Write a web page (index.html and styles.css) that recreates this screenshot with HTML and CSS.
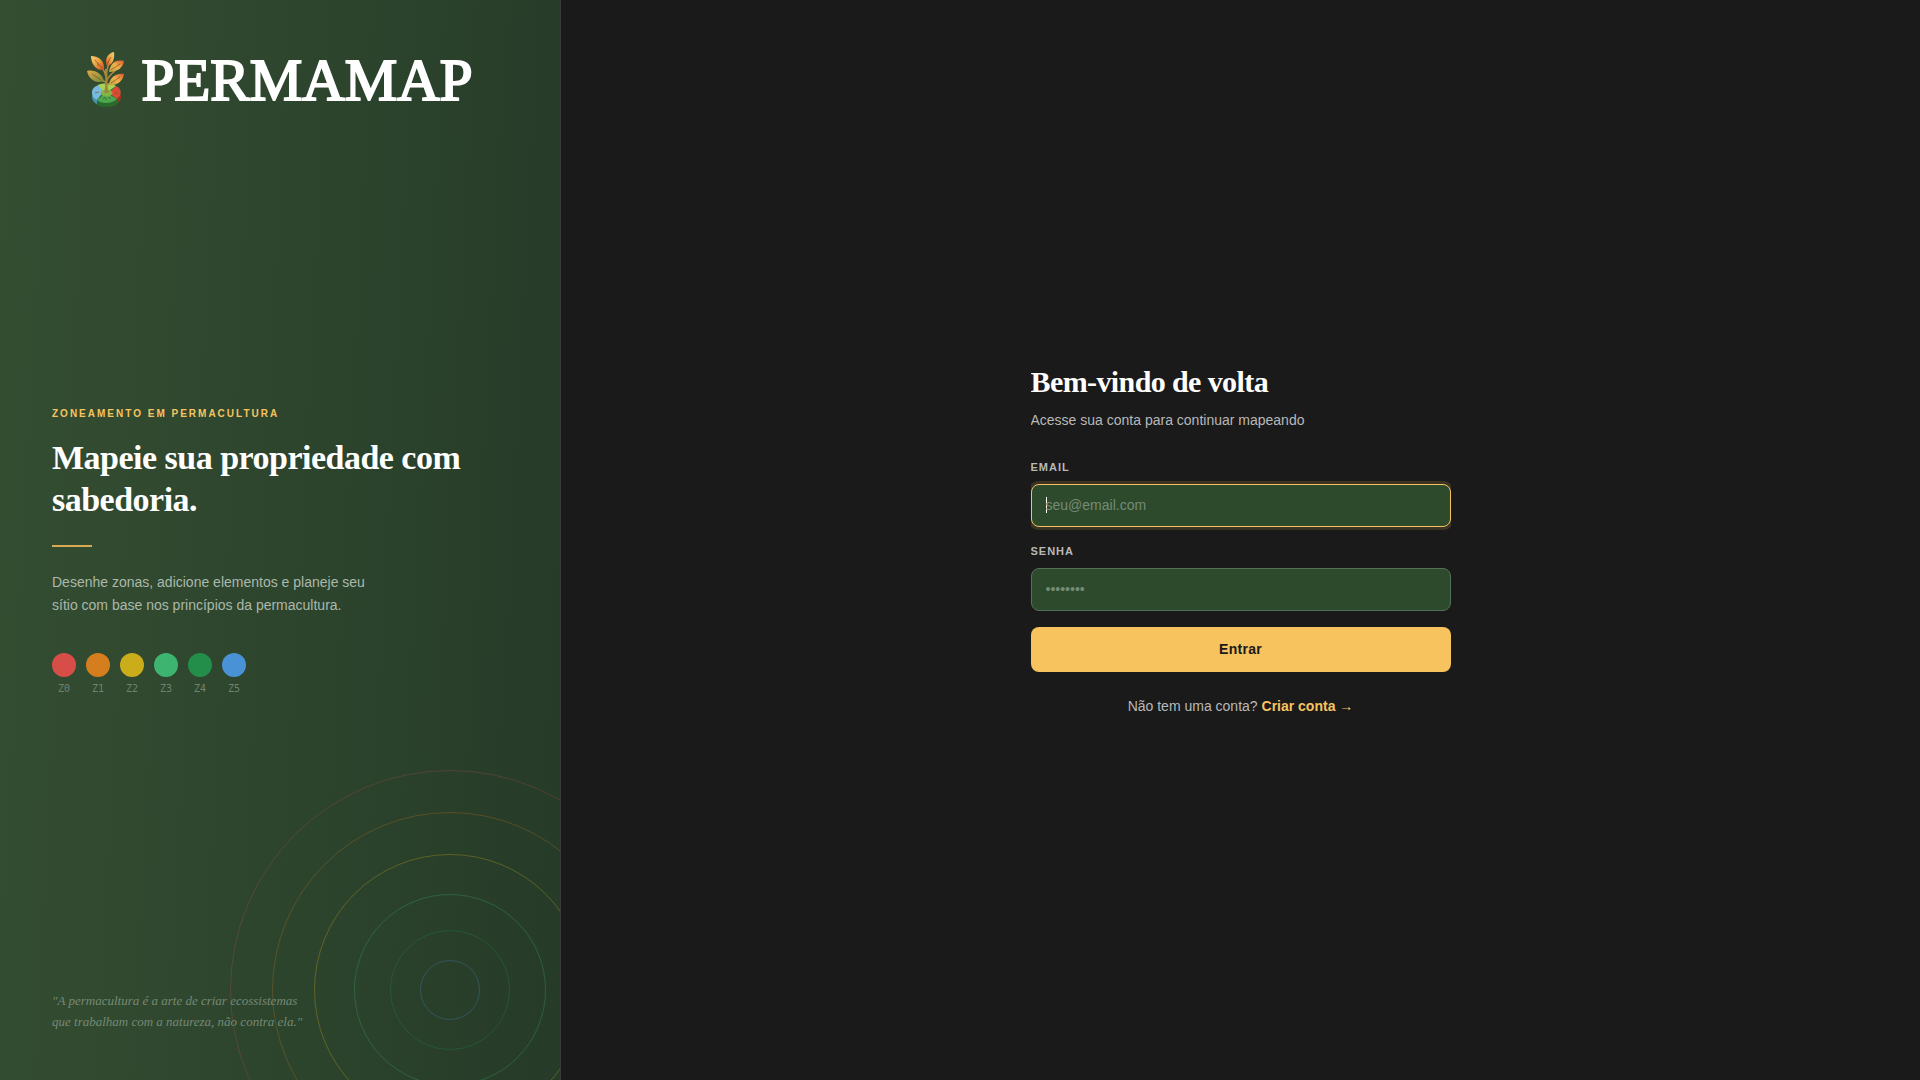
FILE: index.html
```html
<!DOCTYPE html>
<html lang="pt-BR">
<head>
    <meta charset="UTF-8">
    <meta name="viewport" content="width=device-width, initial-scale=1.0">
    <title>Permamap - Entrar</title>
    <link rel="stylesheet" href="styles.css">
</head>
<body>
    <div class="page">
        <aside class="panel">
            <svg class="rings" viewBox="0 0 442 442" fill="none" aria-hidden="true">
                <circle cx="221" cy="221" r="219.500" stroke="#e05050" stroke-opacity="0.22"/>
                <circle cx="221" cy="221" r="177.500" stroke="#e08020" stroke-opacity="0.25"/>
                <circle cx="221" cy="221" r="135.500" stroke="#d4b31a" stroke-opacity="0.3"/>
                <circle cx="221" cy="221" r="95.500" stroke="#3cb371" stroke-opacity="0.3"/>
                <circle cx="221" cy="221" r="59.500" stroke="#228b4b" stroke-opacity="0.3"/>
                <circle cx="221" cy="221" r="29.500" stroke="#4a90d9" stroke-opacity="0.28"/>
            </svg>

            <div class="logo">
                <svg class="logo-icon" width="38" height="56" viewBox="0 0 38 56" aria-hidden="true">
                    <defs>
                        <linearGradient id="leafWarm" x1="0" y1="0" x2="1" y2="1">
                            <stop offset="0" stop-color="#f6d070"/>
                            <stop offset="0.450" stop-color="#eba545"/>
                            <stop offset="1" stop-color="#d0481f"/>
                        </linearGradient>
                        <linearGradient id="leafTop" x1="1" y1="0" x2="0" y2="1">
                            <stop offset="0" stop-color="#f6d070"/>
                            <stop offset="0.500" stop-color="#eba545"/>
                            <stop offset="1" stop-color="#d0481f"/>
                        </linearGradient>
                        <linearGradient id="leafRight" x1="0" y1="1" x2="1" y2="0">
                            <stop offset="0" stop-color="#b9a43c"/>
                            <stop offset="0.500" stop-color="#efb04e"/>
                            <stop offset="1" stop-color="#d65a28"/>
                        </linearGradient>
                        <linearGradient id="leafOlive" x1="0" y1="0" x2="1" y2="1">
                            <stop offset="0" stop-color="#e3a944"/>
                            <stop offset="0.500" stop-color="#a89b40"/>
                            <stop offset="1" stop-color="#6f8a35"/>
                        </linearGradient>
                    </defs>
                    <!-- round base with the coloured zones -->
                    <path d="M5 40C5 35 11 32 19 32C28 32 34 35 34 40V45C34 51 28 55 19.500 55C11 55 5 51 5 45Z" fill="#2c6a2c"/>
                    <path d="M5 40C5 37 8 34 12 33L17 39L10 48C7 47 5 45 5 41Z" fill="#78b9df"/>
                    <path d="M5 41C5 45 7 47 10 48V52C6 50 5 47 5 44Z" fill="#4b8fbb"/>
                    <path d="M11 33C15 31 25 31 29 34L22 39H16Z" fill="#a9d155"/>
                    <path d="M29 34C35 37 35 43 30 47L22 41Z" fill="#dc4a37"/>
                    <path d="M34 40C34 43 33 45 30 47V51C33 49 34 47 34 45Z" fill="#a52f24"/>
                    <path d="M10 48L16 43H23L30 47C25 52 14 52 10 48Z" fill="#49a850"/>
                    <ellipse cx="19.500" cy="41" rx="6" ry="3.500" fill="#83b544"/>
                    <!-- stem and branches -->
                    <path d="M19 31C20 26 24 22 28 19M18 30C17 29 15 28 13 27M18.500 24C18 19 16 17 14 15M19 22C20 16 22 12 23 8M20 33L27 28" fill="none" stroke="#b08d3f" stroke-width="1.500"/>
                    <path d="M17 41C19 36 18 26 18 17L20.500 17C20.500 28 20 36 22 41Z" fill="#a5853d"/>
                    <!-- leaves -->
                    <path d="M4 4C12 4 18 9 17 18C9 19 4 12 4 4Z" fill="url(#leafWarm)"/>
                    <path d="M27 0C28 8 25 13 20 14C17 7 21 1 27 0Z" fill="url(#leafTop)"/>
                    <path d="M37 9C36 16 30 20 22 20C23 12 28 7 37 9Z" fill="url(#leafRight)"/>
                    <path d="M0 19C8 17 15 22 17 29C9 32 2 28 0 19Z" fill="url(#leafOlive)"/>
                    <path d="M37 22C36 29 30 34 22 33C23 25 29 21 37 22Z" fill="url(#leafRight)"/>
                    <path d="M8 8L15 16M11 11V14M24 5L20 12M33 12L24 18M5 22L14 28M33 25L24 31M8 41L12 40M28 40L31 42M16 47L18 45L19 48M21 46H24" fill="none" stroke="#7c401b" stroke-width="0.600"/>
                </svg>
                <span class="logo-text">PERMAMAP</span>
            </div>

            <div class="intro">
                <p class="eyebrow">Zoneamento em permacultura</p>
                <h2 class="headline">Mapeie sua propriedade com sabedoria.</h2>
                <div class="divider"></div>
                <p class="description">Desenhe zonas, adicione elementos e planeje seu sítio com base nos princípios da permacultura.</p>
                <ul class="zones">
                    <li class="zone"><span class="dot z0"></span>Z0</li>
                    <li class="zone"><span class="dot z1"></span>Z1</li>
                    <li class="zone"><span class="dot z2"></span>Z2</li>
                    <li class="zone"><span class="dot z3"></span>Z3</li>
                    <li class="zone"><span class="dot z4"></span>Z4</li>
                    <li class="zone"><span class="dot z5"></span>Z5</li>
                </ul>
            </div>

            <p class="quote">"A permacultura é a arte de criar ecossistemas<br>que trabalham com a natureza, não contra ela."</p>
        </aside>

        <main class="content">
            <form class="login">
                <h1 class="title">Bem-vindo de volta</h1>
                <p class="subtitle">Acesse sua conta para continuar mapeando</p>
                <div class="field">
                    <label for="email">Email</label>
                    <input type="email" id="email" placeholder="seu@email.com" autofocus>
                </div>
                <div class="field">
                    <label for="senha">Senha</label>
                    <input type="password" id="senha" placeholder="••••••••">
                </div>
                <button type="submit" class="submit">Entrar</button>
                <p class="signup">Não tem uma conta? <a href="#">Criar conta →</a></p>
            </form>
        </main>
    </div>
</body>
</html>
```

FILE: styles.css
```css
* {
    box-sizing: border-box;
    margin: 0;
    padding: 0;
}
body {
    font-family: "Liberation Sans", Arial, sans-serif;
    background-color: #1a1a1a;
    color: #fff;
}
.page {
    display: flex;
    min-height: 100vh;
}

/* left panel */
.panel {
    position: relative;
    overflow: hidden;
    flex: 0 0 561px;
    display: flex;
    flex-direction: column;
    justify-content: space-between;
    padding: 48px 52px;
    background: linear-gradient(93deg, #344e32 0%, #2d452d 50%, #263b28 100%);
    border-right: 1px solid #3a3a3a;
}
.rings {
    position: absolute;
    right: -111px;
    bottom: -131px;
    width: 442px;
    height: 442px;
}
.logo {
    display: flex;
    justify-content: center;
    align-items: center;
    gap: 16px;
    height: 64px;
}
.logo-text {
    font-family: "Liberation Serif", serif;
    font-size: 59px;
    line-height: 64px;
    -webkit-text-stroke: 2px #fff;
}
.intro {
    position: relative;
}
.eyebrow {
    font-size: 10px;
    font-weight: bold;
    line-height: 12px;
    letter-spacing: 2px;
    text-transform: uppercase;
    color: #f7c35f;
    margin-bottom: 17px;
}
.headline {
    font-family: "Liberation Serif", serif;
    font-size: 34px;
    line-height: 42px;
    letter-spacing: -0.015em;
    margin-bottom: 24px;
}
.divider {
    width: 40px;
    height: 2px;
    background-color: #d9aa54;
    margin-bottom: 24px;
}
.description {
    max-width: 340px;
    font-size: 14px;
    line-height: 23px;
    color: #abb8ab;
    margin-bottom: 36px;
}
.zones {
    display: flex;
    gap: 10px;
    list-style: none;
}
.zone {
    display: flex;
    flex-direction: column;
    align-items: center;
    gap: 6px;
    font-family: "DejaVu Sans Mono", monospace;
    font-size: 10px;
    line-height: 12px;
    color: #71836f;
}
.dot {
    width: 24px;
    height: 24px;
    border-radius: 50%;
}
.z0 { background-color: #d74e49; }
.z1 { background-color: #d47e1e; }
.z2 { background-color: #cbac1b; }
.z3 { background-color: #3eb471; }
.z4 { background-color: #238d4a; }
.z5 { background-color: #4a92d6; }
.quote {
    position: relative;
    font-family: "Liberation Serif", serif;
    font-size: 13px;
    font-style: italic;
    line-height: 21px;
    color: #778975;
}

/* login form */
.content {
    flex: 1;
    display: flex;
    justify-content: center;
    align-items: center;
    padding: 40px;
}
.login {
    width: 100%;
    max-width: 420px;
    overflow: hidden;
}
.title {
    font-family: "Liberation Serif", serif;
    font-size: 30px;
    line-height: 34px;
    letter-spacing: -0.02em;
    margin-bottom: 10px;
}
.subtitle {
    font-size: 14px;
    line-height: 22px;
    color: #b8b8b8;
    margin-bottom: 28px;
}
.field {
    margin-bottom: 16px;
}
.field label {
    display: block;
    font-size: 11px;
    font-weight: bold;
    line-height: 17px;
    letter-spacing: 1px;
    text-transform: uppercase;
    color: #b8b8b8;
    margin-bottom: 8px;
}
.field input {
    display: block;
    width: 100%;
    padding: 12px 14px;
    font-family: inherit;
    font-size: 14px;
    line-height: 17px;
    color: #fff;
    background-color: #2d4a2d;
    border: 1px solid #54715a;
    border-radius: 8px;
    outline: none;
}
.field input::placeholder {
    color: #748b74;
}
.field input:focus {
    border-color: #f7c35f;
    box-shadow: 0 0 0 3px rgba(247, 195, 95, 0.15);
}
/* steady caret while the field is empty */
.field input:focus:placeholder-shown {
    caret-color: transparent;
    background-image: linear-gradient(#fff, #fff);
    background-repeat: no-repeat;
    background-size: 1px 16px;
    background-position: 14px center;
}
.submit {
    display: block;
    width: 100%;
    height: 45px;
    font-family: inherit;
    font-size: 14px;
    font-weight: bold;
    letter-spacing: 0.02em;
    color: #1a1a1a;
    background-color: #f7c35f;
    border: none;
    border-radius: 8px;
    cursor: pointer;
}
.signup {
    margin-top: 24px;
    font-size: 14px;
    line-height: 20px;
    text-align: center;
    color: #b8b8b8;
}
.signup a {
    font-weight: bold;
    color: #f7c35f;
    text-decoration: none;
}
```
